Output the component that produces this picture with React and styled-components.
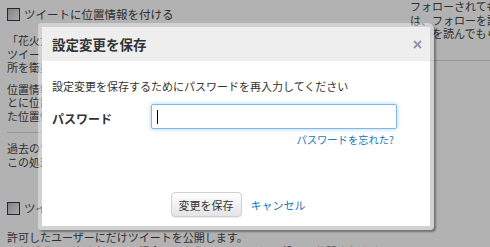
import React from "react";
import styled, { createGlobalStyle } from "styled-components";

const Global = createGlobalStyle`
  html, body { margin: 0; padding: 0; background: #fff; }
  body { font-family: "Noto Sans CJK JP", "Noto Sans", sans-serif; overflow: hidden; }
`;

const Page = styled.div`
  position: relative;
  width: 490px;
  height: 247px;
  overflow: hidden;
  display: grid;
  grid-template-columns: 403px 80px;
  padding-left: 7px;
  box-sizing: border-box;
  color: #444;
`;

const LeftCol = styled.div`
  display: flex;
  flex-direction: column;
  overflow: hidden;
`;

const RightCol = styled.div`
  display: flex;
  flex-direction: column;
  overflow: hidden;
  white-space: nowrap;
`;

const CheckRow = styled.div`
  display: flex;
  align-items: center;
  gap: 4px;
  height: 16px;
  margin-top: ${(p) => p.$mt}px;
  font-size: 11.5px;
  white-space: nowrap;
`;

const CheckBox = styled.span`
  width: 11px;
  height: 11px;
  border: 1px solid #1d3f66;
  background: linear-gradient(135deg, #bdbdbd, #f4f4f4);
  flex: none;
`;

const Para = styled.p`
  margin: ${(p) => p.$mt}px 0 0;
  font-size: 11px;
  line-height: 13.5px;
  white-space: nowrap;
`;

const Rule = styled.hr`
  margin: ${(p) => p.$mt}px 0 0;
  border: 0;
  border-top: 1px solid #d6d6d6;
  width: 100%;
`;

const Overlay = styled.div`
  position: absolute;
  inset: 0;
  background: rgba(0, 0, 0, 0.3);
`;

const Frame = styled.div`
  position: absolute;
  left: 38px;
  top: 23px;
  width: 396px;
  height: 207px;
  box-sizing: border-box;
  padding: 4px;
  border-radius: 3px 6px 4px 3px;
  background: rgba(255, 255, 255, 0.4);
  box-shadow: 2px 2px 2px rgba(0, 0, 0, 0.35);
`;

const Dialog = styled.div`
  width: 100%;
  height: 100%;
  background: #fff;
  display: flex;
  flex-direction: column;
  border-radius: 0 3px 0 0;
`;

const Header = styled.div`
  height: 34px;
  background: #eeeeee;
  display: flex;
  align-items: center;
  justify-content: space-between;
  padding: 0 8px 0 10px;
  flex: none;
`;

const Title = styled.h3`
  margin: 0;
  font-size: 13.5px;
  font-weight: bold;
  color: #333;
`;

const Close = styled.button`
  border: 0;
  background: none;
  padding: 0;
  width: 9px;
  height: 9px;
  display: flex;
  cursor: pointer;
`;

const Body = styled.div`
  flex: 1;
  display: flex;
  flex-direction: column;
  padding: 17px 33px 9px 10px;
`;

const Lead = styled.p`
  margin: 0;
  font-size: 11px;
  line-height: 16px;
  color: #333;
  white-space: nowrap;
`;

const FieldRow = styled.div`
  display: flex;
  align-items: center;
  margin-top: 10px;
`;

const Label = styled.label`
  width: 99px;
  font-size: 12px;
  font-weight: bold;
  color: #333;
  padding-top: 3px;
`;

const InputBox = styled.div`
  width: 246px;
  height: 25px;
  box-sizing: border-box;
  border: 1px solid #7cb8ea;
  border-radius: 2px;
  box-shadow: 0 0 4px rgba(100, 170, 230, 0.55);
  display: flex;
  align-items: center;
  padding-left: 5px;
`;

const Caret = styled.span`
  width: 1px;
  height: 14px;
  background: #000;
`;

const Forgot = styled.a`
  align-self: flex-end;
  margin: 4px 3px 0 0;
  font-size: 10.3px;
  line-height: 14px;
  color: #2276bb;
  text-decoration: none;
  white-space: nowrap;
`;

const Footer = styled.div`
  margin-top: auto;
  display: flex;
  align-items: center;
  justify-content: center;
  gap: 9px;
  padding-left: 27px;
`;

const Button = styled.button`
  width: 71px;
  height: 25px;
  border: 1px solid #cfcfcf;
  border-radius: 4px;
  background: linear-gradient(#ffffff, #e4e4e4);
  box-shadow: 0 1px 1px rgba(0, 0, 0, 0.08);
  font-family: inherit;
  font-size: 11px;
  color: #333;
  padding: 0;
`;

const Cancel = styled.a`
  font-size: 11px;
  color: #2276bb;
  text-decoration: none;
`;

export default function App() {
  return (
    <>
      <Global />
      <Page>
        <LeftCol>
          <CheckRow $mt={6}>
            <CheckBox />
            ツイートに位置情報を付ける
          </CheckRow>
          <Para $mt={12}>
            「花火大会なう」などとツイートする時に、位置情報を付けることができます。
            <br />
            ツイートには、コンピューターや携帯電話から取得した場
            <br />
            所を衛星測位システムなどで特定した位置情報が付きます。
          </Para>
          <Para $mt={8}>
            位置情報を付けてツイートすると、設定を変更しない限りツイートご
            <br />
            とに位置情報が付きます。ツイートごとに位置情報を削除したり、付け
            <br />
            た位置情報を確認したりできます。
          </Para>
          <Rule $mt={9} />
          <Para $mt={9}>
            過去のツイートに付けた位置情報をすべて削除します。
            <br />
            この処理には最大で30分ほどかかることがあります。
          </Para>
          <CheckRow $mt={31}>
            <CheckBox />
            ツイートを非公開にする
          </CheckRow>
          <Para $mt={15}>
            許可したユーザーにだけツイートを公開します。
            <br />
            これがチェックされている場合、あなたのツイートは一般には公開されません。
          </Para>
        </LeftCol>
        <RightCol>
          <Para $mt={0}>
            フォローされてもし
            <br />
            は、フォローを許可
            <br />
            ートを読んでもら
          </Para>
          <Rule $mt={19} />
        </RightCol>
        <Overlay />
        <Frame>
          <Dialog>
            <Header>
              <Title>設定変更を保存</Title>
              <Close aria-label="閉じる">
                <svg width="9" height="9" viewBox="0 0 9 9">
                  <path d="M1 1 L8 8 M8 1 L1 8" stroke="#8e9aa8" strokeWidth="2" />
                </svg>
              </Close>
            </Header>
            <Body>
              <Lead>設定変更を保存するためにパスワードを再入力してください</Lead>
              <FieldRow>
                <Label>パスワード</Label>
                <InputBox>
                  <Caret />
                </InputBox>
              </FieldRow>
              <Forgot href="#">パスワードを忘れた?</Forgot>
              <Footer>
                <Button>変更を保存</Button>
                <Cancel href="#">キャンセル</Cancel>
              </Footer>
            </Body>
          </Dialog>
        </Frame>
      </Page>
    </>
  );
}
